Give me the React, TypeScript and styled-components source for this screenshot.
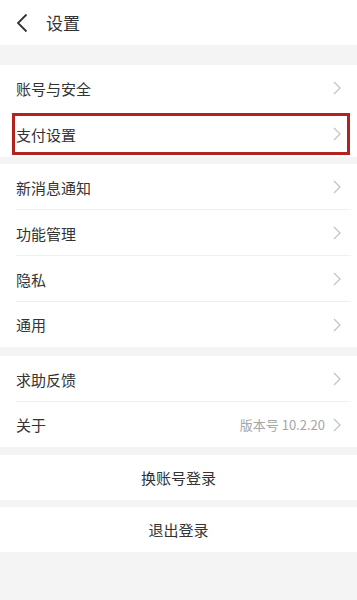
import styled, { createGlobalStyle } from "styled-components";

const GlobalStyle = createGlobalStyle`
  html, body {
    margin: 0;
    padding: 0;
    background: #f4f4f4;
    font-family: "Noto Sans CJK SC", "Noto Sans", sans-serif;
    color: #333;
  }
`;

const Page = styled.div`
  width: 357px;
  min-height: 600px;
  background: #f4f4f4;
  display: flex;
  flex-direction: column;
`;

const Header = styled.div`
  height: 45px;
  background: #fff;
  display: flex;
  align-items: center;
  padding-left: 16px;
  gap: 18px;
`;

const Title = styled.div`
  font-size: 17px;
  color: #333;
`;

const Group = styled.div<{ $gap: number }>`
  margin-top: ${(p) => p.$gap}px;
  background: #fff;
`;

const Row = styled.div<{ $h: number; $line?: boolean }>`
  position: relative;
  height: ${(p) => p.$h}px;
  display: flex;
  align-items: center;
  padding: 0 16px;
  font-size: 15px;
  &::after {
    content: "";
    display: ${(p) => (p.$line ? "block" : "none")};
    position: absolute;
    left: 16px;
    right: 6px;
    bottom: 0;
    height: 1px;
    background: #f0f0f0;
  }
`;

const Label = styled.div`
  flex: 1;
`;

const Value = styled.span`
  font-size: 13px;
  color: #a6a6a6;
  margin-right: 8px;
`;

const Highlight = styled.div`
  position: absolute;
  left: 12px;
  right: 7px;
  top: 2px;
  bottom: 2px;
  border: 3px solid #b3221f;
  pointer-events: none;
`;

const Button = styled.div<{ $gap: number }>`
  margin-top: ${(p) => p.$gap}px;
  height: 45px;
  background: #fff;
  display: flex;
  align-items: center;
  justify-content: center;
  font-size: 15px;
  color: #333;
`;

const Chevron = () => (
  <svg width="8" height="14" viewBox="0 0 8 14">
    <path d="M1 1 L7 7 L1 13" fill="none" stroke="#c4c4c4" strokeWidth="1.3" />
  </svg>
);

const Back = () => (
  <svg width="12" height="20" viewBox="0 0 12 20">
    <path d="M10.5 1.5 L2 10 L10.5 18.5" fill="none" stroke="#333" strokeWidth="1.8" />
  </svg>
);

type Item = { label: string; value?: string; mark?: boolean };

const groups: { gap: number; items: Item[] }[] = [
  { gap: 20, items: [{ label: "账号与安全" }, { label: "支付设置", mark: true }] },
  {
    gap: 7,
    items: [{ label: "新消息通知" }, { label: "功能管理" }, { label: "隐私" }, { label: "通用" }],
  },
  { gap: 9, items: [{ label: "求助反馈" }, { label: "关于", value: "版本号 10.2.20" }] },
];

export default function App() {
  return (
    <Page>
      <GlobalStyle />
      <Header>
        <Back />
        <Title>设置</Title>
      </Header>
      {groups.map((g, gi) => (
        <Group key={gi} $gap={g.gap}>
          {g.items.map((it, i) => (
            <Row
              key={it.label}
              $h={i === g.items.length - 1 && gi > 0 ? 45 : 46}
              $line={i < g.items.length - 1 && !g.items[i + 1].mark}
            >
              <Label>{it.label}</Label>
              {it.value && <Value>{it.value}</Value>}
              <Chevron />
              {it.mark && <Highlight />}
            </Row>
          ))}
        </Group>
      ))}
      <Button $gap={8}>换账号登录</Button>
      <Button $gap={7}>退出登录</Button>
    </Page>
  );
}
